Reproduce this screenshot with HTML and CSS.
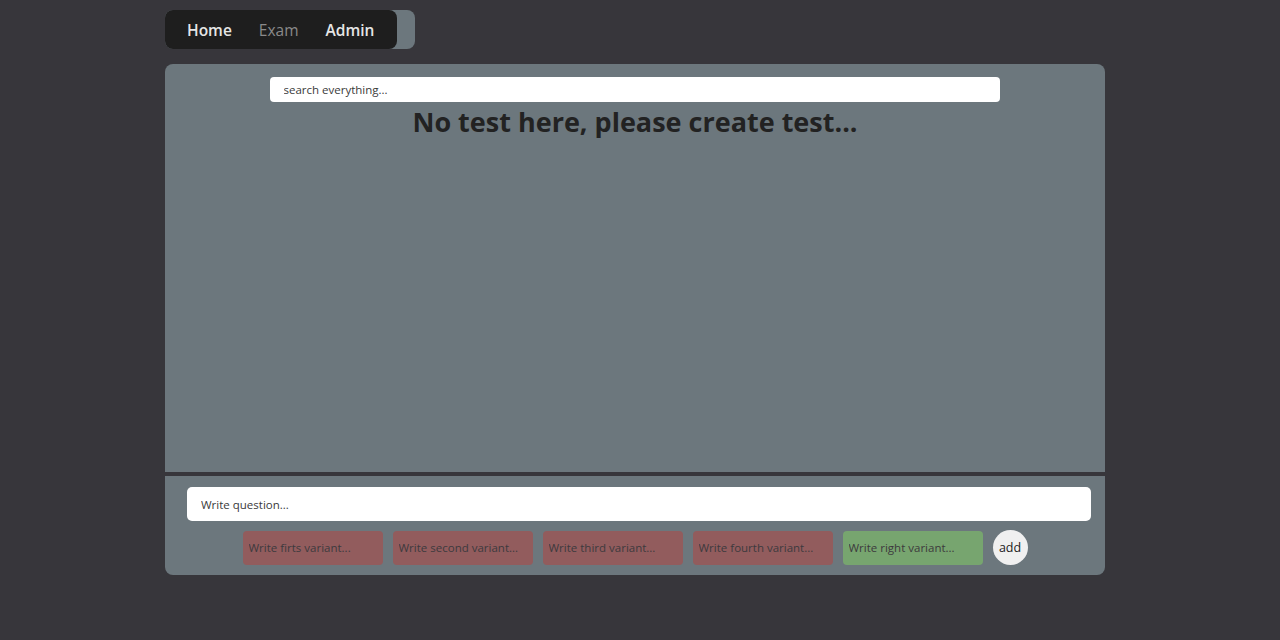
FILE: index.html
```html
<!DOCTYPE html>
<html>
<head>
<meta charset="utf-8">
<link rel="stylesheet" href="styles.css">
</head>
<body>
<div class="page">
  <div class="navwrap">
    <nav class="nav">
      <a class="nav-link">Home</a>
      <a class="nav-link dim">Exam</a>
      <a class="nav-link">Admin</a>
    </nav>
  </div>
  <div class="board">
    <section class="top">
      <input class="search" placeholder="search everything...">
      <h1 class="empty">No test here, please create test...</h1>
    </section>
    <section class="bottom">
      <input class="question" placeholder="Write question...">
      <div class="variants">
        <input class="variant wrong" placeholder="Write firts variant...">
        <input class="variant wrong" placeholder="Write second variant...">
        <input class="variant wrong" placeholder="Write third variant...">
        <input class="variant wrong" placeholder="Write fourth variant...">
        <input class="variant right" placeholder="Write right variant...">
        <button class="add">add</button>
      </div>
    </section>
  </div>
</div>
</body>
</html>
```
FILE: styles.css
```css
* { box-sizing: border-box; }
html, body { margin: 0; padding: 0; }
body {
  background: #37363b;
  font-family: "Open Sans", "Noto Sans", sans-serif;
  width: 1280px;
  height: 640px;
  overflow: hidden;
}
.page {
  width: 940px;
  margin-left: 165px;
  padding-top: 10px;
  display: flex;
  flex-direction: column;
  gap: 15px;
}
.navwrap {
  width: 250px;
  height: 39px;
  background: #6c777d;
  border-radius: 8px;
}
.nav {
  width: 232px;
  height: 39px;
  background: #1e1e1e;
  border-radius: 8px;
  display: flex;
  align-items: center;
  padding-left: 22px;
  gap: 27px;
}
.nav-link {
  color: #e6e6e6;
  font-size: 15.5px;
  font-weight: 600;
}
.nav-link.dim { color: #8a8a8a; font-weight: 500; }
.board {
  display: flex;
  flex-direction: column;
  gap: 4px;
}
.top {
  background: #6c777d;
  border-radius: 8px 8px 0 0;
  height: 408px;
  padding-top: 13px;
  display: flex;
  flex-direction: column;
  align-items: center;
}
.search {
  width: 730px;
  height: 25px;
  margin-right: 1px;
  border: none;
  border-radius: 4px;
  background: #fff;
  padding: 0 14px;
  font-family: inherit;
  font-size: 11.5px;
  color: #333;
  outline: none;
}
.search::placeholder, .question::placeholder { color: #3a3a3a; }
.empty {
  margin: 2px 0 0;
  font-size: 27px;
  font-weight: 700;
  color: #222;
  line-height: 36px;
}
.bottom {
  background: #6c777d;
  border-radius: 0 0 8px 8px;
  height: 99px;
  padding: 11px 14px 0 22px;
  display: flex;
  flex-direction: column;
  gap: 9px;
}
.question {
  width: 904px;
  height: 34px;
  border: none;
  border-radius: 5px;
  background: #fff;
  padding: 0 14px;
  font-family: inherit;
  font-size: 11.5px;
  outline: none;
}
.variants {
  display: flex;
  justify-content: center;
  align-items: center;
  gap: 10px;
  padding-right: 8px;
}
.variant {
  width: 140px;
  height: 34px;
  border: none;
  border-radius: 4px;
  padding: 0 6px;
  font-family: inherit;
  font-size: 11.5px;
  outline: none;
}
.variant.wrong { background: #925c5d; }
.variant.right { background: #77a56f; }
.variant::placeholder { color: #3d3a3d; }
.add {
  width: 35px;
  height: 35px;
  border-radius: 50%;
  border: none;
  background: #f0f0f0;
  font-family: inherit;
  font-size: 12.5px;
  color: #222;
  padding: 0;
}
```
